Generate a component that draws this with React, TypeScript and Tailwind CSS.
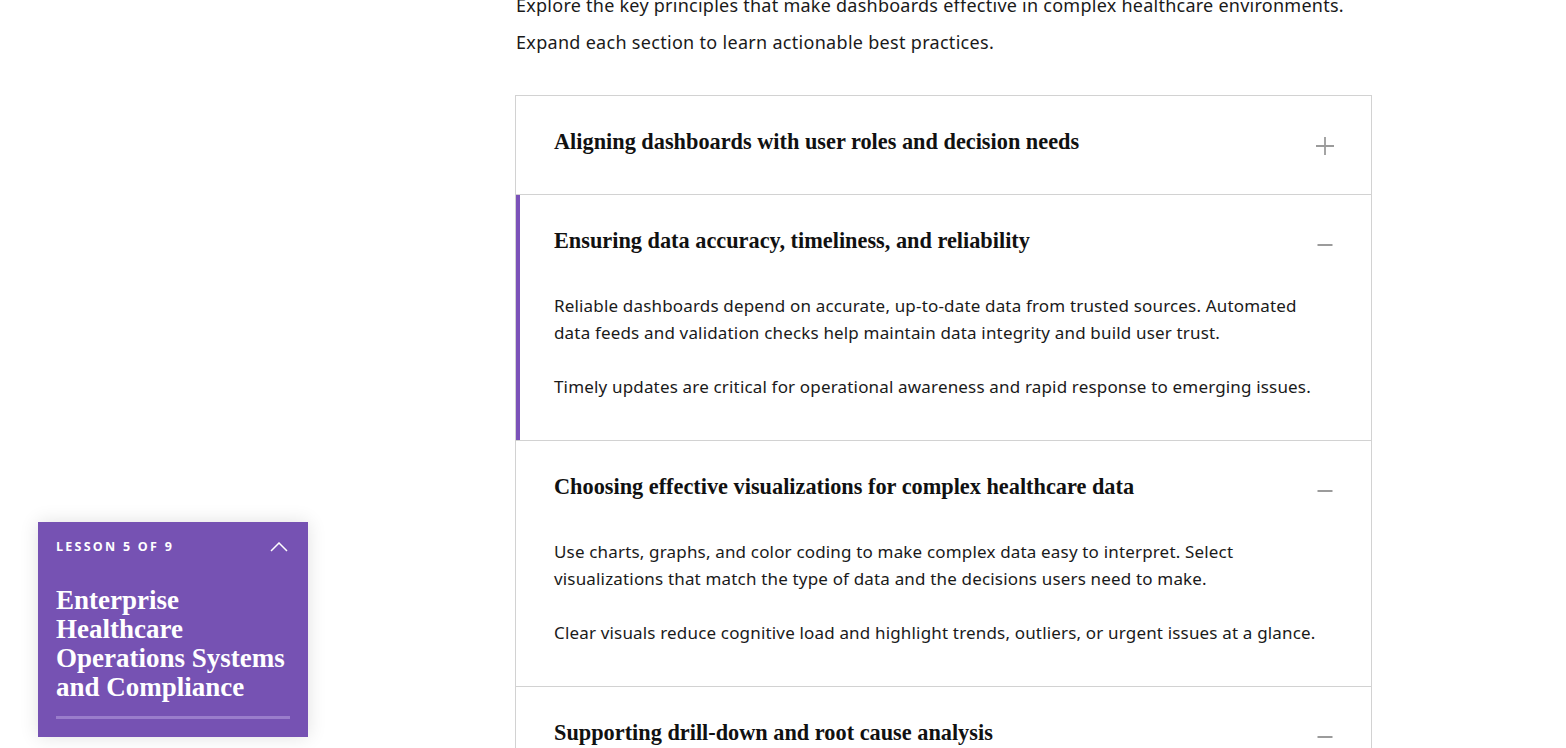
import React from "react";

const sans = { fontFamily: '"Noto Sans", "Open Sans", sans-serif' };
const serif = { fontFamily: '"Liberation Serif", "DejaVu Serif", serif' };

function Plus() {
  return (
    <svg width="20" height="20" viewBox="0 0 20 20" className="shrink-0">
      <path d="M10 1v18M1 10h18" stroke="#9b9b9b" strokeWidth="1.8" fill="none" />
    </svg>
  );
}
function Minus() {
  return (
    <svg width="20" height="20" viewBox="0 0 20 20" className="shrink-0">
      <path d="M2.5 10h15" stroke="#9b9b9b" strokeWidth="2" fill="none" />
    </svg>
  );
}

type Item = { title: string; open: boolean; active?: boolean; body?: string[] };

const items: Item[] = [
  { title: "Aligning dashboards with user roles and decision needs", open: false },
  {
    title: "Ensuring data accuracy, timeliness, and reliability",
    open: true,
    active: true,
    body: [
      "Reliable dashboards depend on accurate, up-to-date data from trusted sources. Automated data feeds and validation checks help maintain data integrity and build user trust.",
      "Timely updates are critical for operational awareness and rapid response to emerging issues.",
    ],
  },
  {
    title: "Choosing effective visualizations for complex healthcare data",
    open: true,
    body: [
      "Use charts, graphs, and color coding to make complex data easy to interpret. Select visualizations that match the type of data and the decisions users need to make.",
      "Clear visuals reduce cognitive load and highlight trends, outliers, or urgent issues at a glance.",
    ],
  },
  { title: "Supporting drill-down and root cause analysis", open: true, body: ["Drill-down capabilities let users move from summary metrics to the underlying details."] },
];

export default function App() {
  return (
    <div className="relative h-[748px] w-[1566px] overflow-hidden bg-white text-[#1a1a1a]">
      <div className="-mt-[8px] pl-[516px]" style={sans}>
        <p className="text-[18px] leading-[27px] tracking-[0.25px]">
          Explore the key principles that make dashboards effective in complex healthcare environments.
        </p>
        <p className="mt-[10px] text-[18px] leading-[27px] tracking-[0.3px]">Expand each section to learn actionable best practices.</p>
        <div className="ml-[-1px] mt-[39px] w-[857px] border border-b-0 border-[#d2d2d2]">
          {items.map((it, i) => (
            <div
              key={i}
              className={`border-b border-[#d2d2d2] pb-[40px] pl-[38px] pr-[36px] pt-[34px] ${it.active ? "shadow-[inset_4px_0_0_#7b52b9]" : ""}`}
            >
              <div className="flex h-[24px] items-center justify-between">
                <h3 className="text-[22.3px] font-bold leading-[24px] text-[#111]" style={serif}>
                  {it.title}
                </h3>
                <div className="translate-y-[4px]">{it.open ? <Minus /> : <Plus />}</div>
              </div>
              {it.open && it.body && (
                <div className="mt-[39px] flex max-w-[780px] flex-col gap-[27px] text-[17px] leading-[27px] tracking-[0.17px]">
                  {it.body.map((b, j) => (
                    <p key={j}>{b}</p>
                  ))}
                </div>
              )}
            </div>
          ))}
        </div>
      </div>

      <div className="absolute left-[38px] top-[522px] w-[270px] bg-[#7652b3] px-[18px] pb-[18px] pt-[16px] shadow-[0_0_18px_rgba(0,0,0,0.12)]">
        <div className="flex items-center justify-between">
          <span className="text-[12.5px] font-bold uppercase tracking-[0.18em] text-white" style={{ fontFamily: '"Open Sans", sans-serif' }}>
            Lesson 5 of 9
          </span>
          <svg width="18" height="10" viewBox="0 0 18 10" className="mr-[2px]">
            <path d="M1 9l8-8 8 8" stroke="#fff" strokeWidth="1.5" fill="none" />
          </svg>
        </div>
        <h2 className="mt-[29px] text-[27px] font-bold leading-[29px] text-white" style={serif}>
          Enterprise Healthcare Operations Systems and Compliance
        </h2>
        <div className="mt-[14px] h-[3px] w-full bg-[#9a7dcb]" />
      </div>
    </div>
  );
}
